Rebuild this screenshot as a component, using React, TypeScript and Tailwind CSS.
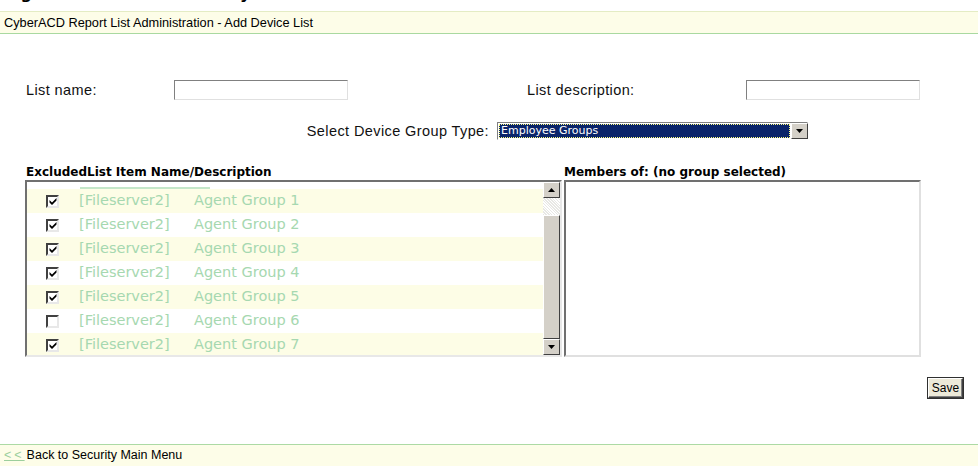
import React from 'react';

const rows = [1, 2, 3, 4, 5, 6, 7].map((n) => ({
  id: n,
  server: '[Fileserver2]',
  name: `Agent Group ${n}`,
  checked: n !== 6,
}));

function CheckBox({ checked }: { checked: boolean }) {
  return (
    <span className="inline-flex w-[13px] h-[13px] bg-white border-2 border-t-[#404040] border-l-[#404040] border-b-[#e8e8e8] border-r-[#e8e8e8] items-center justify-center">
      {checked && (
        <svg width="8" height="8" viewBox="0 0 8 8">
          <path d="M0.5 3 L3 5.5 L7.5 1 L7.5 3.5 L3 8 L0.5 5.5 Z" fill="#000" />
        </svg>
      )}
    </span>
  );
}

function Arrow({ up }: { up?: boolean }) {
  return (
    <div className="w-[17px] h-[16px] bg-[#d4d0c8] border border-t-white border-l-white border-r-[#404040] border-b-[#404040] flex items-center justify-center">
      <svg width="7" height="4" viewBox="0 0 7 4">
        <path d={up ? 'M0 4 L3.5 0 L7 4 Z' : 'M0 0 L3.5 4 L7 0 Z'} fill="#000" />
      </svg>
    </div>
  );
}

export default function App() {
  return (
    <div className="w-[978px] h-[466px] bg-white overflow-hidden flex flex-col font-['Liberation_Sans',Arial,sans-serif] text-black">
      {/* cut-off heading above the bar */}
      <div className="h-[11px] overflow-hidden relative">
        <div className="absolute left-[4px] top-[-16px] text-[16px] leading-[20px] font-bold font-['DejaVu_Sans',sans-serif] whitespace-nowrap">
          Figure 11 Add Device Entry
        </div>
      </div>

      <div className="h-[23px] bg-[#fdfde8] border-t border-[#e4ecc4] border-b border-b-[#a9d9a0] pl-[4px] flex items-center text-[12.75px]">
        CyberACD Report List Administration - Add Device List
      </div>

      <div className="flex items-center h-[20px] mt-[46px] text-[14.5px] leading-[20px] tracking-[0.4px] text-[#111]">
        <div className="pl-[26px] w-[174px]">List name:</div>
        <input className="w-[174px] h-[20px] bg-white border border-t-[#808080] border-l-[#808080] border-r-[#e0e0e0] border-b-[#e0e0e0] outline-none" />
        <div className="ml-[179px] w-[219px]">List description:</div>
        <input className="w-[174px] h-[20px] bg-white border border-t-[#808080] border-l-[#808080] border-r-[#e0e0e0] border-b-[#e0e0e0] outline-none" />
      </div>

      <div className="flex items-center h-[18px] mt-[22px] text-[14.5px] leading-[18px] tracking-[0.4px] text-[#111]">
        <div className="w-[489px] text-right">Select Device Group Type:</div>
        <div className="ml-[8px] w-[311px] h-[18px] flex border border-t-[#808080] border-l-[#808080] border-r-white border-b-white bg-white">
          <div className="flex-1 m-[1px] bg-[#0a246a] text-white text-[11px] tracking-normal leading-[14px] px-[2px] outline-dotted outline-1 outline-[#ffff80] -outline-offset-1 font-['DejaVu_Sans',sans-serif]">
            Employee Groups
          </div>
          <div className="w-[16px] h-[16px]">
            <Arrow />
          </div>
        </div>
      </div>

      <div className="flex mt-[25px] text-[12px] font-bold font-['DejaVu_Sans',sans-serif] leading-[14px]">
        <div className="ml-[26px] w-[538px]">ExcludedList Item Name/Description</div>
        <div>Members of: (no group selected)</div>
      </div>

      <div className="flex mt-[1px] ml-[25px]">
        <div className="w-[537px] h-[177px] border-2 border-t-[#707070] border-l-[#707070] border-r-[#e8e8e8] border-b-[#e8e8e8] flex">
          <div className="flex-1 overflow-hidden font-['DejaVu_Sans',sans-serif] text-[14.5px] text-[#a6d8b0]">
            <div className="h-[7px] flex items-end bg-white">
              <span className="ml-[53px] w-[130px] h-[2px] bg-[#c4e6c8]" />
            </div>
            {rows.map((r) => (
              <div key={r.id} className={`h-[24px] flex items-center ${r.id % 2 === 1 ? 'bg-[#fdfde6]' : 'bg-white'}`}>
                <span className="ml-[19px] flex"><CheckBox checked={r.checked} /></span>
                <span className="ml-[20px] w-[115px]">{r.server}</span>
                <span>{r.name}</span>
              </div>
            ))}
          </div>
          <div className="w-[17px] flex flex-col bg-[#eeeeea]">
            <Arrow up />
            <div className="h-[17px] bg-[repeating-linear-gradient(45deg,#e8e8e4_0px,#e8e8e4_1px,#ffffff_1px,#ffffff_2px)]" />
            <div className="flex-1 bg-[#d4d0c8] border border-t-white border-l-white border-r-[#404040] border-b-[#404040]" />
            <Arrow />
          </div>
        </div>
        <div className="ml-[2px] w-[357px] h-[177px] bg-white border-2 border-t-[#707070] border-l-[#707070] border-r-[#e0e0e0] border-b-[#e0e0e0]" />
      </div>

      <div className="flex justify-end mt-[21px] pr-[15px]">
        <button className="w-[35px] h-[20px] bg-[#ece9d8] border border-t-white border-l-white border-r-[#404040] border-b-[#404040] shadow-[inset_-1px_-1px_0_#808080] text-[12px] leading-none outline outline-1 outline-[#303030]">
          Save
        </button>
      </div>

      <div className="mt-auto h-[22px] bg-[#fdfde8] border-t border-[#acdaa4] pl-[4px] flex items-center text-[12.5px]">
        <span className="text-[#9ccf9c] underline tracking-[3px]">&lt;&lt;</span>
        <span className="ml-[2px]">Back to Security Main Menu</span>
      </div>
    </div>
  );
}
